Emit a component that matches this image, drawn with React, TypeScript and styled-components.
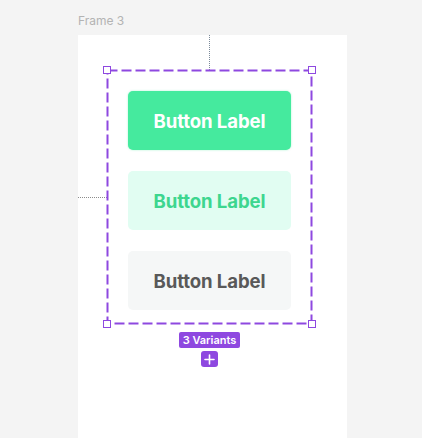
import React from 'react';
import styled, { createGlobalStyle } from 'styled-components';

const GlobalStyle = createGlobalStyle`
    html, body {
        margin: 0;
        padding: 0;
        background: #f4f4f4;
        font-family: Inter, "Noto Sans", sans-serif;
    }
`;

const Canvas = styled.div`
    width: 422px;
    height: 438px;
    overflow: hidden;
    padding: 14px 0 0 78px;
    box-sizing: border-box;
    display: flex;
    flex-direction: column;
`;

const FrameName = styled.div`
    font-size: 12px;
    color: #b3b3b3;
    line-height: 14px;
    height: 21px;
`;

const Frame = styled.div`
    position: relative;
    width: 269px;
    flex: 1 1 auto;
    background: #ffffff;
    padding: 35px 0 0 29px;
    box-sizing: border-box;
`;

const GuideV = styled.div`
    position: absolute;
    left: 131px;
    top: 0;
    height: 35px;
    border-left: 1px dotted #7c8a99;
`;

const GuideH = styled.div`
    position: absolute;
    left: 0;
    top: 162px;
    width: 29px;
    border-top: 1px dotted #8c8c8c;
`;

const Selection = styled.div`
    position: relative;
    width: 205px;
    height: 254px;
    box-sizing: border-box;
    padding: 21px 21px 14px;
    display: flex;
    flex-direction: column;
    gap: 21px;
`;

const DashBorder = styled.svg`
    position: absolute;
    inset: 0;
    overflow: visible;
    pointer-events: none;
`;

const Handle = styled.div<{ $x: 'left' | 'right'; $y: 'top' | 'bottom' }>`
    position: absolute;
    width: 6px;
    height: 6px;
    background: #fff;
    border: 1px solid #8e48e0;
    ${p => p.$x}: -4px;
    ${p => p.$y}: -4px;
`;

type Variant = 'primary' | 'soft' | 'neutral';

const variantColors: Record<Variant, { bg: string; fg: string; shadow: string }> = {
    primary: { bg: '#45ea9e', fg: '#ffffff', shadow: '0 0 2px rgba(69, 234, 158, 0.5)' },
    soft: { bg: '#e1fdf2', fg: '#3dd68f', shadow: 'none' },
    neutral: { bg: '#f5f7f7', fg: '#595959', shadow: 'none' },
};

const VariantButton = styled.div<{ $variant: Variant }>`
    height: 59px;
    border-radius: 5px;
    display: flex;
    align-items: center;
    justify-content: center;
    font-size: 18.6px;
    font-weight: 700;
    letter-spacing: -0.1px;
    background: ${p => variantColors[p.$variant].bg};
    color: ${p => variantColors[p.$variant].fg};
    box-shadow: ${p => variantColors[p.$variant].shadow};
`;

const Footer = styled.div`
    width: 205px;
    display: flex;
    flex-direction: column;
    align-items: center;
    padding-top: 8px;
    gap: 3px;
`;

const Badge = styled.div`
    background: #8e48e0;
    color: #fff;
    font-size: 11px;
    font-weight: 600;
    line-height: 16px;
    padding: 0 4px;
    border-radius: 2px;
`;

const AddButton = styled.div`
    width: 17px;
    height: 16px;
    background: #8e48e0;
    border-radius: 3px;
    display: flex;
    align-items: center;
    justify-content: center;
`;

export default function App() {
    return (
        <>
            <GlobalStyle />
            <Canvas>
                <FrameName>Frame 3</FrameName>
                <Frame>
                    <GuideV />
                    <GuideH />
                    <Selection>
                        <DashBorder width="205" height="254">
                            <rect x="0.5" y="0.5" width="204" height="253" fill="none" stroke="#8e48e0" strokeWidth="2" strokeDasharray="10 4" />
                        </DashBorder>
                        <VariantButton $variant="primary">Button Label</VariantButton>
                        <VariantButton $variant="soft">Button Label</VariantButton>
                        <VariantButton $variant="neutral">Button Label</VariantButton>
                        <Handle $x="left" $y="top" />
                        <Handle $x="right" $y="top" />
                        <Handle $x="left" $y="bottom" />
                        <Handle $x="right" $y="bottom" />
                    </Selection>
                    <Footer>
                        <Badge>3 Variants</Badge>
                        <AddButton>
                            <svg width="11" height="11" viewBox="0 0 11 11">
                                <path d="M5.5 1v9M1 5.5h9" stroke="#fff" strokeWidth="1.6" strokeLinecap="round" />
                            </svg>
                        </AddButton>
                    </Footer>
                </Frame>
            </Canvas>
        </>
    );
}
